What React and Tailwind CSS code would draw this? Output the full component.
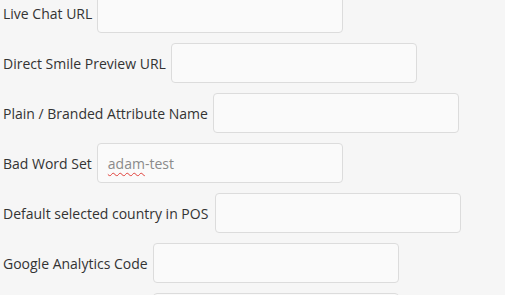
import React from "react";

const rows = [
  { label: "Live Chat URL" },
  { label: "Direct Smile Preview URL" },
  { label: "Plain / Branded Attribute Name" },
  { label: "Bad Word Set", value: true },
  { label: "Default selected country in POS", extra: true },
  { label: "Google Analytics Code" },
  { label: "Google Analytics Code", hidden: true },
];

export default function App() {
  return (
    <div className="w-[505px] h-[295px] overflow-hidden bg-[#f6f6f6] font-['Open_Sans',sans-serif] text-[14px] text-[#333333]">
      <div className="mt-[-7px] pl-[3px] flex flex-col gap-[10px]">
        {rows.map((r, i) => (
          <div key={i} className={`flex items-center h-[40px] ${r.extra ? "gap-[7px]" : "gap-[5px]"}`}>
            <span className={`whitespace-nowrap ${r.hidden ? "invisible" : ""}`}>{r.label}</span>
            <div className="w-[246px] h-[40px] shrink-0 rounded-[4px] border border-[#dcdcdc] bg-[#fafafa] flex items-center px-[10px] text-[#8a8a8a]">
              {r.value && (
                <span>
                  <span className="underline decoration-wavy decoration-[#e0403a] decoration-[1px] underline-offset-[3px]">adam</span>-test
                </span>
              )}
            </div>
          </div>
        ))}
      </div>
    </div>
  );
}
